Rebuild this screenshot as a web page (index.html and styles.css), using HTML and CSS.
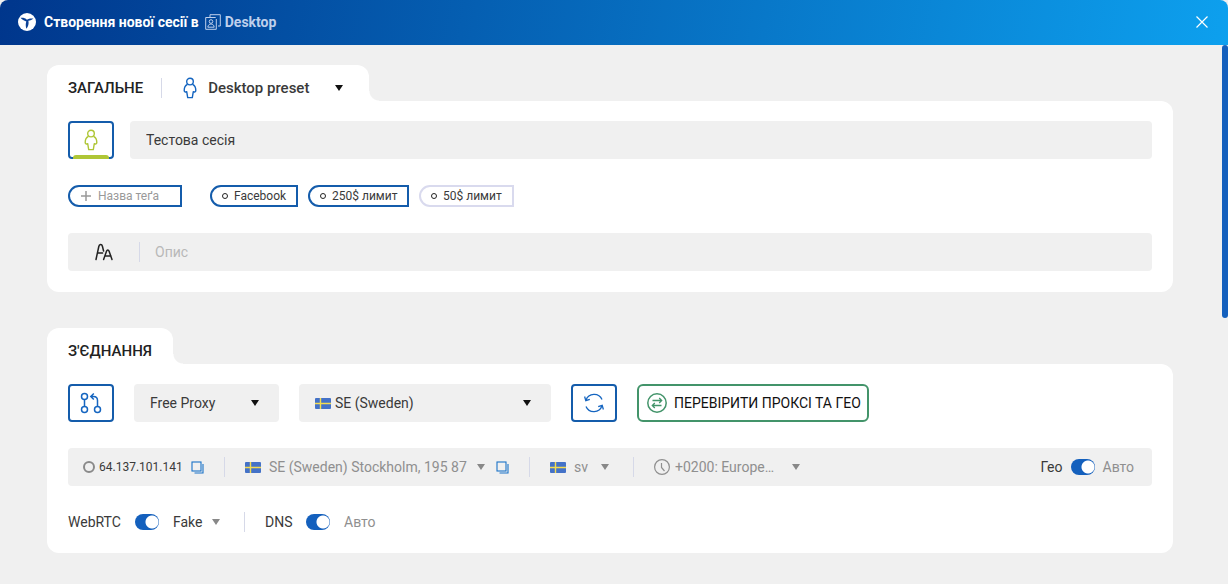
FILE: index.html
```html
<!DOCTYPE html>
<html lang="uk">
<head>
<meta charset="utf-8">
<meta name="viewport" content="width=device-width, initial-scale=1">
<title>Створення нової сесії</title>
<link rel="stylesheet" href="styles.css">
</head>
<body>
<svg class="sprite" aria-hidden="true">
  <symbol id="person" viewBox="0 0 14 22"><g fill="none" stroke="currentColor" stroke-width="1.4" stroke-linejoin="round"><circle cx="7" cy="4.600" r="3.300"/><path d="M4.400 7.400C2.300 8.500 1.200 10.600 1.200 13.400c0 1.500 1.300 2 2.500 1.300L4.700 20.600h4.600l1-5.900c1.200.7 2.500.2 2.500-1.300 0-2.800-1.100-4.900-3.200-6"/></g></symbol>
  <symbol id="copy" viewBox="0 0 13 13"><g fill="none" stroke="currentColor" stroke-width="1.1"><rect x="1" y="1" width="9" height="9"/><path d="M12 3v9H3.500"/></g></symbol>
  <symbol id="flag" viewBox="0 0 16 11"><rect width="16" height="11" rx="1" fill="#4472c8"/><path d="M5.500 0v11M0 5.500h16" stroke="#f4dc50" stroke-width="1.400"/></symbol>
</svg>
<header class="titlebar">
  <svg class="logo" viewBox="0 0 18 18" aria-hidden="true"><circle cx="9" cy="9" r="9" fill="#fff"/><path d="M2.500 4.800c2.600-.3 4.800.2 6.400 1.900 1.700-1.100 3.800-1.500 6.600-1.200-1.300 1.300-3.100 1.900-5.100 2.300.6 3-.1 5.600-2 8-.8-2.700-.9-5.200-.1-7.400C6 7.900 4 6.800 2.500 4.800z" fill="#0a4096"/></svg>
  <h1 class="title">Створення нової сесії в</h1>
  <span class="place">
    <svg class="place-icon" viewBox="0 0 16 16" fill="none" stroke="currentColor" aria-hidden="true"><path d="M5 3V.7h10.300V12H13M10.700 3.500H.7v11.800h10.600V5"/><circle cx="6" cy="7.500" r="1.800"/><path d="M2.800 13.200c.3-2.200 1.500-3.200 3.200-3.200s2.900 1 3.200 3.200z"/></svg>
    Desktop
  </span>
  <button class="close" type="button" aria-label="Закрити"><svg viewBox="0 0 12 12" fill="none" stroke="currentColor" stroke-width="1.200"><path d="M.5.5l11 11M11.500.5l-11 11"/></svg></button>
</header>
<main class="content">
  <section class="card">
    <div class="tab">
      <h2 class="heading">ЗАГАЛЬНЕ</h2>
      <span class="divider"></span>
      <svg class="person preset-icon"><use href="#person"/></svg>
      <select class="select preset" aria-label="Пресет"><option>Desktop preset</option></select>
    </div>
    <div class="panel">
      <div class="row">
        <button class="square avatar" type="button" aria-label="Іконка сесії"><svg class="person"><use href="#person"/></svg></button>
        <input class="field name" type="text" value="Тестова сесія" aria-label="Назва сесії">
      </div>
      <div class="tags">
        <label class="tag tag-new">
          <svg viewBox="0 0 10 10" stroke="currentColor" stroke-width="1.500" aria-hidden="true"><path d="M5 0v10M0 5h10"/></svg>
          <input type="text" placeholder="Назва теґа" aria-label="Назва теґа">
        </label>
        <button class="tag" type="button"><i class="dot"></i>Facebook</button>
        <button class="tag tag-wide" type="button"><i class="dot"></i>250$ лимит</button>
        <button class="tag tag-off" type="button"><i class="dot"></i>50$ лимит</button>
      </div>
      <label class="field description">
        <svg class="letters" viewBox="0 0 18 18" fill="none" stroke="currentColor" stroke-width="1.500" stroke-linecap="round" aria-hidden="true"><path d="M1 16.500L3.800 3.500C4.300 1 6.800.8 7.400 3.200L8.600 8M2.600 10h5M8.600 16.500l2.900-8.200c.6-1.800 2-1.800 2.600 0l2.900 8.200M10 13h6"/></svg>
        <span class="divider"></span>
        <input type="text" placeholder="Опис" aria-label="Опис">
      </label>
    </div>
  </section>

  <section class="card">
    <div class="tab"><h2 class="heading">З'ЄДНАННЯ</h2></div>
    <div class="panel">
      <div class="row connection">
        <button class="square" type="button" aria-label="Тип з'єднання"><svg class="route" viewBox="0 0 22 22" fill="none" stroke="currentColor" stroke-width="1.500" aria-hidden="true"><circle cx="4.500" cy="4.500" r="3"/><circle cx="4.500" cy="17.500" r="3"/><circle cx="17.500" cy="17.500" r="3"/><path d="M4.500 7.500v7M17.500 14.500V8.500q0-4-4-4h-2.500M13.800 1.500l-3 3 3 3"/></svg></button>
        <select class="select field proxy" aria-label="Проксі"><option>Free Proxy</option></select>
        <div class="field country">
          <svg class="flag"><use href="#flag"/></svg>
          <select class="select" aria-label="Країна"><option>SE (Sweden)</option></select>
        </div>
        <button class="square" type="button" aria-label="Оновити"><svg class="refresh" viewBox="0 0 20 20" fill="none" stroke="currentColor" stroke-width="1.300" aria-hidden="true"><path d="M2 7.200A8.600 8.600 0 0 1 18 6.500M18 12.800A8.600 8.600 0 0 1 2 13.500M.6 3.500l1.200 4.200 4-1.400M19.400 16.500l-1.200-4.200-4 1.400"/></svg></button>
        <button class="check" type="button">
          <svg viewBox="0 0 20 20" fill="none" stroke="currentColor" stroke-width="1.300" aria-hidden="true"><circle cx="10" cy="10" r="9.200" stroke-width="1.500"/><path d="M5.500 7.500h9M12.200 5l2.500 2.500-2.500 2.500M14.500 12.500h-9M7.800 10l-2.500 2.500L7.800 15"/></svg>
          ПЕРЕВІРИТИ ПРОКСІ ТА ГЕО
        </button>
      </div>
      <div class="field info">
        <div class="info-part">
          <i class="status"></i><span class="ip">64.137.101.141</span>
          <button class="copy" type="button" aria-label="Копіювати IP"><svg><use href="#copy"/></svg></button>
        </div>
        <span class="divider"></span>
        <div class="info-part muted">
          <svg class="flag"><use href="#flag"/></svg>
          <select class="select small location" aria-label="Розташування"><option>SE (Sweden) Stockholm, 195 87</option></select>
          <button class="copy" type="button" aria-label="Копіювати розташування"><svg><use href="#copy"/></svg></button>
        </div>
        <span class="divider"></span>
        <div class="info-part muted">
          <svg class="flag"><use href="#flag"/></svg>
          <select class="select small language" aria-label="Мова"><option>sv</option></select>
        </div>
        <span class="divider"></span>
        <div class="info-part muted clock-part">
          <svg class="clock" viewBox="0 0 16 16" fill="none" stroke="currentColor" stroke-width="1.200" aria-hidden="true"><circle cx="8" cy="8" r="7.400"/><path d="M7.500 4v4.500l3 3.500"/></svg>
          <select class="select small zone" aria-label="Часовий пояс"><option>+0200: Europe…</option></select>
        </div>
        <div class="geo">
          <label for="geo">Гео</label>
          <input class="toggle" id="geo" type="checkbox" checked>
          <span class="auto">Авто</span>
        </div>
      </div>
      <div class="options">
        <label class="webrtc" for="webrtc">WebRTC</label>
        <input class="toggle" id="webrtc" type="checkbox" checked>
        <select class="select small fake" aria-label="Режим WebRTC"><option>Fake</option></select>
        <span class="divider"></span>
        <label class="dns" for="dns">DNS</label>
        <input class="toggle" id="dns" type="checkbox" checked>
        <span class="auto">Авто</span>
      </div>
    </div>
  </section>
  <div class="scrollbar"></div>
</main>
</body>
</html>
```

FILE: styles.css
```css
* { box-sizing: border-box; }
body {
  margin: 0;
  min-height: 100vh;
  background: #f0f0f0;
  color: #3a3a3a;
  font: 14px/20px Roboto, "Open Sans", sans-serif;
}
button, input, select { font: inherit; color: inherit; margin: 0; }
button { background: none; border: 0; padding: 0; cursor: pointer; }
svg { display: block; flex: none; }
.sprite { position: absolute; width: 0; height: 0; }

.titlebar {
  display: flex;
  align-items: center;
  height: 45px;
  padding: 0 20px 1px 18px;
  border-radius: 8px 8px 0 0;
  background: linear-gradient(100deg, #00368c, #0da0ee);
  color: #fff;
}
.logo { width: 18px; height: 18px; }
.title { margin: 0 6px 0 8px; font-size: 14px; font-weight: 700; }
.place { display: flex; align-items: center; gap: 4px; font-weight: 700; color: #bfd0ec; }
.place-icon { width: 16px; height: 16px; }
.close { margin-left: auto; }
.close svg { width: 12px; height: 12px; }

.content { position: relative; padding: 20px 55px 31px 47px; }
.scrollbar {
  position: absolute;
  top: 0;
  right: 0;
  width: 6px;
  height: 273px;
  border-radius: 3px;
  background: #1460bd;
}
.card + .card { margin-top: 36px; }
.tab {
  position: relative;
  display: flex;
  align-items: center;
  width: fit-content;
  height: 36px;
  padding: 10px 21px 0;
  border-radius: 12px 12px 0 0;
  background: #fff;
}
.tab::after {
  content: "";
  position: absolute;
  left: 100%;
  bottom: 0;
  width: 10px;
  height: 10px;
  background: radial-gradient(circle at 100% 0, transparent 9px, #fff 10px);
}
.heading { margin: 0; font-size: 15px; font-weight: 500; color: #222; }
.divider { flex: none; width: 1px; height: 20px; background: #d6d9e8; }
.tab .divider { margin: 0 21px 0 18px; }
.person { width: 14px; height: 22px; }
.preset-icon { color: #1565c0; margin-right: 11px; }
.panel {
  display: flex;
  flex-direction: column;
  gap: 26px;
  padding: 20px 21px 21px;
  border-radius: 0 12px 12px 12px;
  background: #fff;
}
.row { display: flex; gap: 16px; }
.field { height: 38px; border: 0; border-radius: 4px; background-color: #f0f0f0; }
.name { flex: 1; min-width: 0; padding: 0 16px; }
.square {
  display: flex;
  align-items: center;
  justify-content: center;
  flex: none;
  width: 46px;
  height: 38px;
  border: 2px solid #145cab;
  border-radius: 4px;
  color: #1565c0;
}
.avatar { position: relative; color: #afc636; }
.avatar::after {
  content: "";
  position: absolute;
  left: 3px;
  right: 3px;
  bottom: -2px;
  height: 4px;
  border-radius: 3px 3px 0 0;
  background: #afc636;
}

.select {
  appearance: none;
  border: 0;
  padding: 0;
  border-radius: 4px;
  background: url("data:image/svg+xml,%3Csvg xmlns='http://www.w3.org/2000/svg' width='8' height='6'%3E%3Cpath d='M0 0h8L4 6z' fill='%23111'/%3E%3C/svg%3E") right center no-repeat;
}
.preset { width: 140px; font-size: 15px; font-weight: 500; background-position: right 5px center; }
.small { background-image: url("data:image/svg+xml,%3Csvg xmlns='http://www.w3.org/2000/svg' width='8' height='6'%3E%3Cpath d='M0 0h8L4 6z' fill='%23888'/%3E%3C/svg%3E"); }

.tags { display: flex; gap: 10px; }
.tag {
  display: flex;
  align-items: center;
  gap: 6px;
  height: 22px;
  width: 88px;
  padding: 0 0 0 10px;
  border: 2px solid #145cab;
  border-radius: 11px 0 0 11px;
  font-size: 12px;
  line-height: 16px;
}
.tag-wide { width: 101px; }
.tag-off { width: 95px; border-color: #d9daee; }
.tag-new { width: 114px; padding-left: 11px; gap: 7px; margin-right: 18px; color: #999; }
.tag-new svg { width: 10px; height: 10px; }
.tag input { width: 72px; padding: 0; border: 0; background: none; }
.dot { width: 6px; height: 6px; border: 1px solid #222; border-radius: 50%; }
::placeholder { color: inherit; opacity: 1; }
.description { display: flex; align-items: center; padding-left: 27px; color: #b8b8b8; }
.description .divider { margin: 0 15px 0 26px; }
.description input { flex: 1; min-width: 0; padding: 0; border: 0; background: none; }
.letters { width: 18px; height: 18px; color: #222; }

.connection { gap: 20px; }
.route { width: 22px; height: 22px; }
.refresh { width: 20px; height: 20px; }
.proxy { width: 145px; padding: 0 16px; background-color: #f0f0f0; background-position: right 20px center; }
.country { display: flex; align-items: center; gap: 4px; width: 252px; padding: 0 20px 0 16px; }
.country .select { flex: 1; height: 38px; }
.flag { width: 16px; height: 11px; }
.check {
  display: flex;
  align-items: center;
  gap: 7px;
  width: 232px;
  padding: 0 8px;
  border: 2px solid #43946a;
  border-radius: 6px;
  color: #111;
  white-space: nowrap;
}
.check svg { width: 20px; height: 20px; color: #43946a; }

.info { display: flex; align-items: center; gap: 20px; padding: 0 18px 0 15px; }
.info-part { display: flex; align-items: center; gap: 8px; }
.status { width: 12px; height: 12px; margin-right: -4px; border: 2px solid #8a8a8a; border-radius: 50%; }
.ip { width: 84px; font-size: 12px; }
.muted, .auto { color: #8f8f8f; }
.copy { color: #1b73c8; }
.copy svg { width: 13px; height: 13px; }
.location { width: 216px; margin-right: 3px; }
.language { width: 35px; margin-right: 4px; }
.clock-part { gap: 5px; }
.clock { width: 16px; height: 16px; }
.zone { width: 125px; }
.geo { display: flex; align-items: center; margin-left: auto; gap: 8px; }
.toggle {
  appearance: none;
  width: 24px;
  height: 16px;
  border-radius: 8px;
  background: radial-gradient(circle at 17px 8px, #fff 6px, #1460bd 7px);
}
.options { display: flex; align-items: center; height: 20px; gap: 14px; }
.webrtc { width: 53px; }
.fake { width: 47px; }
.options .divider { margin: 0 6px 0 10px; }
.dns { width: 27px; }
```
